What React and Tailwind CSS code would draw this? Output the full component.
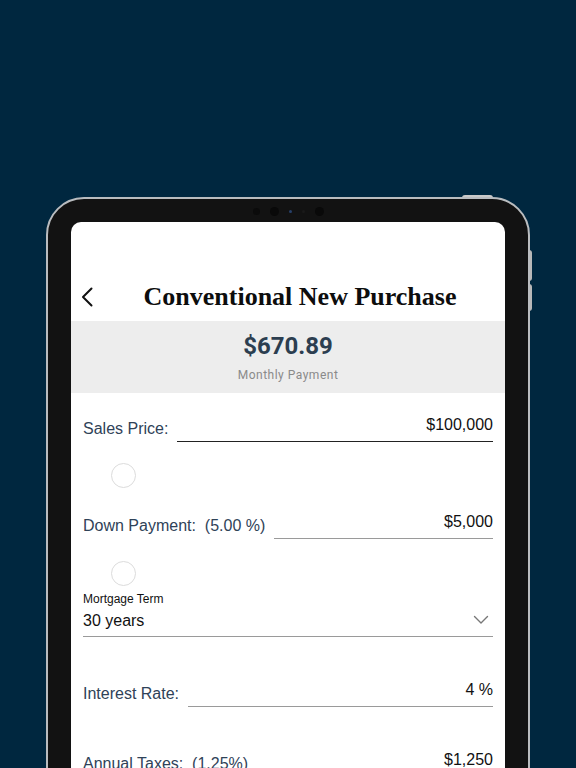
import React from 'react'

const Chevron = () => (
  <svg width="12" height="20" viewBox="0 0 12 20" fill="none">
    <path d="M10.5 1.5L2 10l8.5 8.5" stroke="#111" strokeWidth="2" strokeLinecap="round" strokeLinejoin="round" />
  </svg>
)

const Down = () => (
  <svg width="16" height="10" viewBox="0 0 16 10" fill="none">
    <path d="M1.5 1.5L8 8l6.5-6.5" stroke="#777" strokeWidth="1.4" strokeLinecap="round" strokeLinejoin="round" />
  </svg>
)

const Field = ({ label, value, dark, className }) => (
  <div className={`flex items-end gap-[9px] ${className}`}>
    <div className="pb-[3px] text-[16px] leading-[20px] text-[#2f4258] whitespace-pre">{label}</div>
    <div className={`flex-1 pb-[6px] text-right text-[16px] leading-[20px] text-[#111] ${dark ? 'border-b-[1.5px] border-[#222]' : 'border-b border-[#9a9a9a]'}`}>
      {value}
    </div>
  </div>
)

const Toggle = ({ className }) => (
  <div className={`ml-[28px] w-[25px] h-[25px] rounded-full border border-[#dcdcdc] ${className}`} />
)

export default function App() {
  return (
    <div className="w-[576px] h-[768px] overflow-hidden bg-[#00273f] pt-[197px] font-['Liberation_Sans',Arial,sans-serif]">
      <div className="relative ml-[46px] w-[484px] h-[700px]">
        {/* hardware buttons */}
        <div className="absolute left-[416px] -top-[2px] w-[31px] h-[3px] rounded-t bg-[#c9c9c9]" />
        <div className="absolute left-[483px] top-[53px] w-[3px] h-[31px] rounded-r bg-[#b8b8b8]" />
        <div className="absolute left-[483px] top-[87px] w-[3px] h-[27px] rounded-r bg-[#b8b8b8]" />

        <div className="relative w-full h-full rounded-[38px] border-2 border-[#b9bcbf] bg-[#121212] p-[23px]">
          {/* camera */}
          <div className="absolute top-[8px] left-0 right-0 flex justify-center items-center gap-[10px] pl-[1px]">
            <div className="w-[7px] h-[7px] rounded-full bg-[#0b0b0b]" />
            <div className="w-[9px] h-[9px] rounded-full bg-[#090909]" />
            <div className="w-[3px] h-[3px] rounded-full bg-[#27406a]" />
            <div className="w-[3px] h-[3px] rounded-full bg-[#1a1a1a]" />
            <div className="w-[9px] h-[9px] rounded-full bg-[#090909]" />
          </div>

          <div className="h-full rounded-t-[10px] bg-white overflow-hidden">
            {/* header */}
            <div className="h-[99px] pt-[60px]">
              <div className="flex items-center h-[30px]">
                <div className="w-[24px] pl-[10px] flex items-center"><Chevron /></div>
                <div className="flex-1 text-center font-['Liberation_Serif','Times_New_Roman',serif] font-bold text-[26px] leading-[30px] text-[#0d0d0d]">
                  Conventional New Purchase
                </div>
              </div>
            </div>

            {/* payment */}
            <div className="h-[72px] bg-[#ededed] flex flex-col items-center font-['Roboto',sans-serif]">
              <div className="mt-[11px] text-[24px] leading-[28px] font-bold text-[#2c3e50]">$670.89</div>
              <div className="mt-[8px] text-[12px] leading-[14px] tracking-[0.5px] text-[#8a8a8a]">Monthly Payment</div>
            </div>

            {/* form */}
            <div className="px-3">
              <Field label="Sales Price:" value="$100,000" dark className="mt-[22px]" />
              <Toggle className="mt-[21px]" />
              <Field label="Down Payment:  (5.00 %)" value="$5,000" className="mt-[24px]" />
              <Toggle className="mt-[22px]" />

              <div className="mt-[5px] text-[12px] leading-[16px] text-[#111]">Mortgage Term</div>
              <div className="mt-[4px] flex items-center justify-between pb-[5px] border-b border-[#9a9a9a]">
                <div className="text-[16px] leading-[20px] text-[#111]">30 years</div>
                <div className="mr-[4px] -mt-[2px]"><Down /></div>
              </div>

              <Field label="Interest Rate:" value="4 %" className="mt-[43px]" />
              <Field label="Annual Taxes:  (1.25%)" value="$1,250" className="mt-[43px]" />
            </div>
          </div>
        </div>
      </div>
    </div>
  )
}
